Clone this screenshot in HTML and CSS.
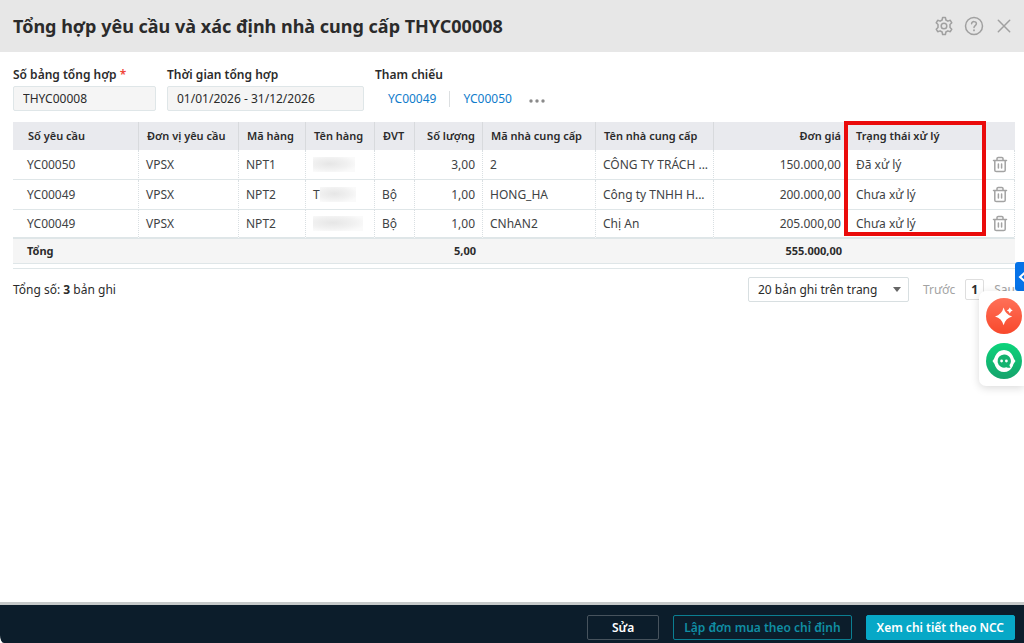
FILE: index.html
```html
<!DOCTYPE html>
<html lang="vi">
<head>
    <meta charset="UTF-8">
    <meta name="viewport" content="width=device-width, initial-scale=1.0">
    <title>Tổng hợp yêu cầu THYC00008</title>
    <link rel="stylesheet" href="styles.css">
</head>
<body>
    <svg class="sprite" aria-hidden="true">
        <symbol id="trash" viewBox="0 0 16 18">
            <path d="M1.5 4.4h13M5 4.2V2.6Q5 1.4 6.2 1.4h3.6Q11 1.4 11 2.6v1.6M2.8 4.6v9.6Q2.8 15.6 4.4 15.6h7.2q1.6 0 1.6-1.4V4.6M6.4 8v4M9.6 8v4" fill="none" stroke="#a3a3a3" stroke-width="1.5" stroke-linecap="round"/>
        </symbol>
    </svg>

    <header class="header">
        <h1>Tổng hợp yêu cầu và xác định nhà cung cấp THYC00008</h1>
        <div class="header-actions">
            <button type="button" class="icon-btn" aria-label="Thiết lập">
                <svg width="20" height="20" viewBox="0 0 20 20" fill="none" stroke="#a0a0a0" stroke-width="1.5" stroke-linejoin="round">
                    <path d="M8.6 1.5h2.8l.5 2.5 2 1.15 2.4-.85 1.5 2.5L16 8.5v3l1.8 1.7-1.5 2.5-2.4-.85-2 1.15-.5 2.5H8.6L8.1 16l-2-1.15-2.4.85-1.5-2.5L4 11.5v-3L2.2 6.8l1.5-2.5 2.4.85 2-1.15z"/>
                    <circle cx="10" cy="10" r="2.8"/>
                </svg>
            </button>
            <button type="button" class="icon-btn" aria-label="Trợ giúp">
                <svg width="20" height="20" viewBox="0 0 20 20" fill="none" stroke="#a0a0a0" stroke-width="1.5" stroke-linecap="round">
                    <circle cx="10" cy="10" r="8.5"/>
                    <path d="M7.6 7.8C7.6 4.8 12.5 5 12.4 7.8C12.3 9.6 10 9.6 10 11.6"/>
                    <path d="M10 14.2v.2" stroke-width="1.8"/>
                </svg>
            </button>
            <button type="button" class="icon-btn" aria-label="Đóng">
                <svg width="20" height="20" viewBox="0 0 20 20" fill="none" stroke="#a0a0a0" stroke-width="1.5" stroke-linecap="round">
                    <path d="M4.3 4.3l11.4 11.4M15.7 4.3L4.3 15.7"/>
                </svg>
            </button>
        </div>
    </header>

    <main class="content">
        <div class="fields">
            <div class="field field-code">
                <label for="code">Số bảng tổng hợp <span class="required">*</span></label>
                <input type="text" id="code" value="THYC00008" readonly>
            </div>
            <div class="field field-period">
                <label for="period">Thời gian tổng hợp</label>
                <input type="text" id="period" value="01/01/2026 - 31/12/2026" readonly>
            </div>
            <div class="field">
                <span class="field-title">Tham chiếu</span>
                <div class="refs">
                    <a href="#">YC00049</a>
                    <a href="#">YC00050</a>
                    <button type="button" class="more" aria-label="Xem thêm">
                        <svg width="16" height="6" viewBox="0 0 16 6" fill="#8a8a8a">
                            <circle cx="2" cy="3" r="1.7"/>
                            <circle cx="8" cy="3" r="1.7"/>
                            <circle cx="14" cy="3" r="1.7"/>
                        </svg>
                    </button>
                </div>
            </div>
        </div>

        <div class="grid">
            <table>
                <colgroup>
                    <col class="c-code">
                    <col class="c-unit">
                    <col class="c-item">
                    <col class="c-name">
                    <col class="c-uom">
                    <col class="c-qty">
                    <col class="c-vendor">
                    <col class="c-vendor-name">
                    <col class="c-price">
                    <col class="c-status">
                    <col class="c-action">
                </colgroup>
                <thead>
                    <tr>
                        <th>Số yêu cầu</th>
                        <th>Đơn vị yêu cầu</th>
                        <th>Mã hàng</th>
                        <th>Tên hàng</th>
                        <th>ĐVT</th>
                        <th class="num">Số lượng</th>
                        <th>Mã nhà cung cấp</th>
                        <th>Tên nhà cung cấp</th>
                        <th class="num">Đơn giá</th>
                        <th class="status">Trạng thái xử lý<span class="highlight"></span></th>
                        <th></th>
                    </tr>
                </thead>
                <tbody>
                    <tr>
                        <td>YC00050</td>
                        <td>VPSX</td>
                        <td>NPT1</td>
                        <td><span class="masked"></span></td>
                        <td></td>
                        <td class="num">3,00</td>
                        <td>2</td>
                        <td>CÔNG TY TRÁCH ...</td>
                        <td class="num">150.000,00</td>
                        <td class="status">Đã xử lý</td>
                        <td class="action"><button type="button" class="icon-btn" aria-label="Xóa"><svg width="16" height="18"><use href="#trash"/></svg></button></td>
                    </tr>
                    <tr>
                        <td>YC00049</td>
                        <td>VPSX</td>
                        <td>NPT2</td>
                        <td><div class="masked-cell">T<span class="masked"></span></div></td>
                        <td>Bộ</td>
                        <td class="num">1,00</td>
                        <td>HONG_HA</td>
                        <td>Công ty TNHH H...</td>
                        <td class="num">200.000,00</td>
                        <td class="status">Chưa xử lý</td>
                        <td class="action"><button type="button" class="icon-btn" aria-label="Xóa"><svg width="16" height="18"><use href="#trash"/></svg></button></td>
                    </tr>
                    <tr>
                        <td>YC00049</td>
                        <td>VPSX</td>
                        <td>NPT2</td>
                        <td><span class="masked masked-wide"></span></td>
                        <td>Bộ</td>
                        <td class="num">1,00</td>
                        <td>CNhAN2</td>
                        <td>Chị An</td>
                        <td class="num">205.000,00</td>
                        <td class="status">Chưa xử lý</td>
                        <td class="action"><button type="button" class="icon-btn" aria-label="Xóa"><svg width="16" height="18"><use href="#trash"/></svg></button></td>
                    </tr>
                </tbody>
                <tfoot>
                    <tr>
                        <td>Tổng</td>
                        <td></td>
                        <td></td>
                        <td></td>
                        <td></td>
                        <td class="num">5,00</td>
                        <td></td>
                        <td></td>
                        <td class="num">555.000,00</td>
                        <td></td>
                        <td></td>
                    </tr>
                </tfoot>
            </table>
        </div>

        <div class="pager">
            <span>Tổng số: <b>3</b> bản ghi</span>
            <div class="pager-nav">
                <div class="select-wrap">
                    <select aria-label="Số bản ghi trên trang">
                        <option>20 bản ghi trên trang</option>
                        <option>50 bản ghi trên trang</option>
                    </select>
                </div>
                <button type="button" class="page-link" disabled>Trước</button>
                <button type="button" class="page-current">1</button>
                <button type="button" class="page-link" disabled>Sau</button>
            </div>
        </div>
    </main>

    <footer class="footer">
        <button type="button" class="btn btn-edit">Sửa</button>
        <button type="button" class="btn btn-outline">Lập đơn mua theo chỉ định</button>
        <button type="button" class="btn btn-primary">Xem chi tiết theo NCC</button>
    </footer>

    <!-- Assistant shortcuts docked to the right edge -->
    <aside class="dock">
        <button type="button" class="dock-toggle" aria-label="Mở rộng">
            <svg width="9" height="12" viewBox="0 0 9 12" fill="none" stroke="#fff" stroke-width="2">
                <path d="M10 1.5L5 6l5 4.5"/>
            </svg>
        </button>
        <div class="dock-panel">
            <button type="button" class="icon-btn" aria-label="Trợ lý AI">
                <svg width="36" height="36" viewBox="0 0 36 36">
                    <defs>
                        <linearGradient id="orange" x1="0" y1="0" x2="0" y2="1">
                            <stop offset="0" stop-color="#ff7058"/>
                            <stop offset="1" stop-color="#f8492c"/>
                        </linearGradient>
                    </defs>
                    <circle cx="18" cy="18" r="18" fill="url(#orange)"/>
                    <path d="M17.6 9.5Q19.4 16.6 26.2 18.4Q19.4 20.2 17.6 27.2Q15.8 20.2 9 18.4Q15.8 16.6 17.6 9.5zM23.8 9.6Q24.5 11.8 26.7 12.5Q24.5 13.2 23.8 15.4Q23.1 13.2 20.9 12.5Q23.1 11.8 23.8 9.6z" fill="#fff"/>
                </svg>
            </button>
            <button type="button" class="icon-btn" aria-label="Trò chuyện">
                <svg width="36" height="36" viewBox="0 0 36 36">
                    <defs>
                        <linearGradient id="green" x1="0" y1="0" x2="0" y2="1">
                            <stop offset="0" stop-color="#0bd47b"/>
                            <stop offset="1" stop-color="#16a36c"/>
                        </linearGradient>
                    </defs>
                    <circle cx="18" cy="18" r="18" fill="url(#green)"/>
                    <path d="M6.5 18Q8.5 15.5 9.2 13Q12 7 18 7Q24 7 26.8 13Q27.5 15.5 29.5 18Q27.5 20.5 26.8 23Q24 29 18 29Q12 29 9.2 23Q8.5 20.5 6.5 18z" fill="#fff"/>
                    <path d="M18 11.4a6.6 6.6 0 1 0 2.4 12.8q2 .9 4.2.4q-1.2-1.2-1.2-2.5A6.6 6.6 0 0 0 18 11.4z" fill="#14b26f"/>
                    <circle cx="15.6" cy="18" r="1.4" fill="#fff"/>
                    <circle cx="20.4" cy="18" r="1.4" fill="#fff"/>
                </svg>
            </button>
        </div>
    </aside>
</body>
</html>
```

FILE: styles.css
```css
* {
    box-sizing: border-box;
}

body {
    display: flex;
    flex-direction: column;
    min-height: 100vh;
    margin: 0;
    background-color: #fff;
    color: #2b2b2b;
    font-family: "Noto Sans", sans-serif;
    font-size: 12px;
    line-height: 16px;
}

button, input, select {
    font: inherit;
    color: inherit;
}

button {
    cursor: pointer;
}

.sprite {
    position: absolute;
    width: 0;
    height: 0;
}

.icon-btn {
    display: flex;
    padding: 0;
    border: none;
    background: none;
}

.header {
    display: flex;
    align-items: center;
    justify-content: space-between;
    height: 52px;
    padding: 0 10px 0 13px;
    background-color: #e7e7e7;
}

h1 {
    margin: 0;
    font-size: 18px;
    font-weight: 700;
    line-height: 24px;
}

.header-actions {
    display: flex;
    gap: 10px;
}

.content {
    flex: 1;
    padding: 14px 9px 0 13px;
}

.fields {
    display: flex;
    gap: 11px;
    margin-bottom: 11px;
}

.field {
    display: flex;
    flex-direction: column;
    gap: 3px;
}

.field label, .field-title {
    font-weight: 600;
    line-height: 17px;
}

.field-code {
    width: 143px;
}

.field-period {
    width: 197px;
}

.required {
    color: #f04438;
}

.field input {
    width: 100%;
    height: 25px;
    padding: 0 9px;
    border: 1px solid #dfe6e8;
    border-radius: 2px;
    background-color: #f5f5f5;
}

.refs {
    display: flex;
    align-items: center;
    height: 25px;
}

.refs a {
    padding: 0 13px;
    color: #0f7ccb;
    text-decoration: none;
}

.refs a + a {
    border-left: 1px solid #dcdfe1;
}

.more {
    display: flex;
    padding: 4px 4px 0;
    border: none;
    background: none;
}

.grid {
    padding-bottom: 4px;
    border-bottom: 1px solid #dfe6e8;
}

table {
    width: 100%;
    table-layout: fixed;
    border-collapse: separate;
    border-spacing: 0;
}

.c-code { width: 126px; }
.c-unit { width: 100px; }
.c-item { width: 67px; }
.c-name { width: 69px; }
.c-uom { width: 40px; }
.c-qty { width: 68px; }
.c-vendor { width: 113px; }
.c-price { width: 133px; }
.c-status { width: 138px; }
.c-action { width: 30px; }

th, td {
    padding: 0 7px;
    text-align: left;
    white-space: nowrap;
}

th {
    height: 28px;
    padding-left: 8px;
    border-right: 1px solid #d8dadd;
    background-color: #e9eaee;
    font-size: 11px;
    font-weight: 600;
}

tbody td {
    height: 30px;
    border-right: 1px dotted #d9dfe2;
    border-bottom: 1px solid #dfe6e8;
    color: #404244;
}

tbody tr:last-child td {
    height: 29px;
    border-bottom-width: 2px;
}

tr > :first-child {
    padding-left: 14px;
}

thead tr > :first-child {
    padding-left: 15px;
}

tfoot td {
    height: 25px;
    border-bottom: 1px solid #dfe6e8;
    background-color: #f5f5f5;
    font-size: 11px;
    font-weight: 700;
}

.num {
    text-align: right;
}

th:nth-child(9), tbody td:nth-child(9) {
    padding-right: 6px;
    border-right: none;
}

tfoot td:nth-child(9) {
    padding-right: 5px;
}

td.status, th.status {
    padding-left: 9px;
    border-right: none;
}

th.status {
    position: relative;
}

th:last-child {
    border-right: none;
}

/* Marks the whole status column */
.highlight {
    position: absolute;
    top: -1px;
    left: -3px;
    width: 142px;
    height: 115px;
    border: 4px solid #ea0b0b;
}

td.action {
    padding: 0 7px;
}

.masked-cell {
    display: flex;
    align-items: center;
}

.masked {
    display: block;
    width: 42px;
    height: 15px;
    background: radial-gradient(ellipse at 40% 45%, #e6e6e6, #f1f1f1 50%, #fafafa 80%);
}

.masked-cell .masked {
    width: 36px;
}

.masked-wide {
    width: 50px;
}

.pager {
    display: flex;
    align-items: center;
    justify-content: space-between;
    padding-top: 8px;
}

.pager-nav {
    display: flex;
    align-items: center;
}

.select-wrap {
    position: relative;
    margin-right: 14px;
}

.select-wrap::after {
    content: "";
    position: absolute;
    top: 10px;
    right: 8px;
    border: 4px solid transparent;
    border-top: 5px solid #666;
    pointer-events: none;
}

select {
    display: block;
    width: 161px;
    height: 25px;
    padding: 0 9px;
    border: 1px solid #d8dfe1;
    border-radius: 2px;
    background-color: #fff;
    appearance: none;
}

.page-link {
    padding: 0;
    border: none;
    background: none;
    color: #a3a3a3;
}

.page-current {
    width: 19px;
    height: 21px;
    margin: 0 10px;
    padding: 0;
    border: 1px solid #dedede;
    border-radius: 2px;
    background-color: #fff;
    font-weight: 700;
}

.footer {
    display: flex;
    align-items: center;
    justify-content: flex-end;
    gap: 14px;
    height: 41px;
    padding: 7px 9px 0 0;
    border-top: 3px solid #c6c9c9;
    border-bottom-left-radius: 4px 8px;
    background-color: #0c1d2b;
}

.btn {
    height: 25px;
    padding: 0 10px;
    border: 1px solid;
    border-radius: 2px;
    background-color: transparent;
    font-weight: 600;
}

.btn-edit {
    width: 72px;
    border-color: #47535d;
    color: #fff;
}

.btn-outline {
    border-color: #0b7f92;
    color: #108ea3;
}

.btn-primary {
    border-color: #07a8c7;
    background-color: #07a8c7;
    color: #fff;
}

.dock {
    position: fixed;
    top: 262px;
    right: 0;
    display: flex;
    flex-direction: column;
    align-items: flex-end;
}

.dock-toggle {
    display: flex;
    align-items: center;
    width: 9px;
    height: 29px;
    padding: 0;
    border: none;
    border-radius: 3px 0 0 3px;
    background-color: #0673e8;
}

.dock-panel {
    display: flex;
    flex-direction: column;
    gap: 9px;
    padding: 7px 2px 7px 7px;
    border-radius: 7px 0 0 7px;
    background-color: #fff;
    box-shadow: 0 2px 8px rgba(0, 0, 0, 0.15);
}
```
